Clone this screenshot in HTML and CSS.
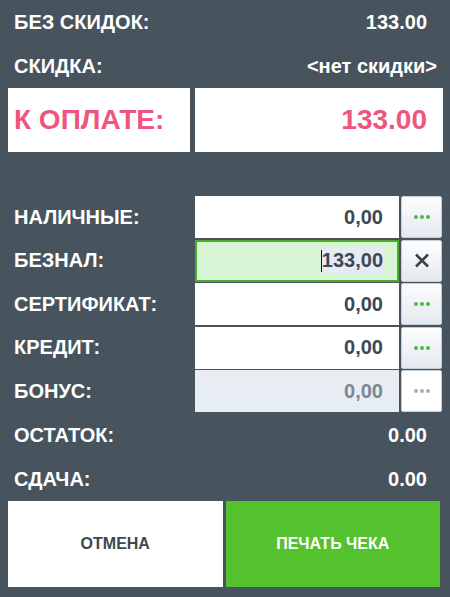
FILE: index.html
```html
<!DOCTYPE html>
<html lang="ru">
<head>
  <meta charset="UTF-8" />
  <meta name="viewport" content="width=device-width, initial-scale=1.0" />
  <title>Оплата</title>
  <link rel="stylesheet" href="styles.css">
</head>
<body>
  <div class="screen">
    <div class="info-row">
      <span>БЕЗ СКИДОК:</span>
      <span class="val">133.00</span>
    </div>
    <div class="info-row">
      <span>СКИДКА:</span>
      <span class="val discount">&lt;нет скидки&gt;</span>
    </div>

    <div class="total">
      <div class="total-label">К ОПЛАТЕ:</div>
      <div class="total-value">133.00</div>
    </div>

    <div class="payments">
      <div class="pay-row">
        <span class="pay-label">НАЛИЧНЫЕ:</span>
        <div class="pay-field">0,00</div>
        <button class="pay-btn"><span class="dots"><i></i><i></i><i></i></span></button>
      </div>
      <div class="pay-row">
        <span class="pay-label">БЕЗНАЛ:</span>
        <div class="pay-field active"><span class="caret"></span><span class="selected">133,00</span></div>
        <button class="pay-btn">
          <svg width="16" height="15" viewBox="0 0 16 15"><path d="M2 1.5 L14 13.5 M14 1.5 L2 13.5" stroke="#3a434b" stroke-width="2.6" fill="none"/></svg>
        </button>
      </div>
      <div class="pay-row">
        <span class="pay-label">СЕРТИФИКАТ:</span>
        <div class="pay-field">0,00</div>
        <button class="pay-btn"><span class="dots"><i></i><i></i><i></i></span></button>
      </div>
      <div class="pay-row">
        <span class="pay-label">КРЕДИТ:</span>
        <div class="pay-field">0,00</div>
        <button class="pay-btn"><span class="dots"><i></i><i></i><i></i></span></button>
      </div>
      <div class="pay-row">
        <span class="pay-label">БОНУС:</span>
        <div class="pay-field disabled">0,00</div>
        <button class="pay-btn disabled"><span class="dots"><i></i><i></i><i></i></span></button>
      </div>
    </div>

    <div class="info-row rest">
      <span>ОСТАТОК:</span>
      <span class="val">0.00</span>
    </div>
    <div class="info-row">
      <span>СДАЧА:</span>
      <span class="val">0.00</span>
    </div>

    <div class="actions">
      <button class="cancel">ОТМЕНА</button>
      <button class="print">ПЕЧАТЬ ЧЕКА</button>
    </div>
  </div>
</body>
</html>
```

FILE: styles.css
```css
* {
  box-sizing: border-box;
  margin: 0;
  padding: 0;
}
body {
  font-family: 'Liberation Sans', Arial, sans-serif;
  font-weight: bold;
  background: #47535d;
  color: #fff;
}
.screen {
  padding: 0 7px 0 8px;
}
.info-row {
  display: flex;
  justify-content: space-between;
  align-items: center;
  height: 44px;
  padding: 0 16px 0 6px;
  font-size: 20px;
}
.info-row .discount {
  margin-right: -10px;
}
.info-row.rest {
  margin-top: 1px;
}
.total {
  display: flex;
  gap: 5px;
  height: 64px;
  margin-bottom: 44px;
  color: #f0557f;
  font-size: 28px;
}
.total-label {
  width: 182px;
  background: #fff;
  display: flex;
  align-items: center;
  padding-left: 6px;
}
.total-value {
  flex: 1;
  background: #fff;
  display: flex;
  align-items: center;
  justify-content: flex-end;
  padding-right: 16px;
}
.payments {
  display: flex;
  flex-direction: column;
  gap: 1.5px;
}
.pay-row {
  display: flex;
  align-items: stretch;
  height: 42px;
}
.pay-label {
  width: 187px;
  display: flex;
  align-items: center;
  padding-left: 6px;
  font-size: 20px;
}
.pay-field {
  width: 204px;
  background: #fff;
  color: #3d4852;
  font-size: 20px;
  display: flex;
  align-items: center;
  justify-content: flex-end;
  padding-right: 16px;
}
.pay-field.active {
  background: #d8f5d6;
  border: 2px solid #4bab2c;
  padding-right: 14px;
}
.pay-field .caret {
  width: 1px;
  height: 22px;
  background: #111;
}
.pay-field .selected {
  background: #e6eaf2;
  padding: 1px 0;
}
.pay-field.disabled {
  background: #e8edf3;
  color: #7a8895;
}
.pay-btn {
  width: 41px;
  margin-left: 2px;
  border: 1px solid #c5cdd6;
  border-radius: 2px;
  background: linear-gradient(#fdfdfe, #e4e9ef);
  display: flex;
  align-items: center;
  justify-content: center;
}
.pay-btn.disabled {
  background: #fff;
}
.dots {
  display: flex;
  gap: 2px;
}
.dots i {
  width: 4px;
  height: 4px;
  border-radius: 50%;
  background: #4cb748;
}
.pay-btn.disabled .dots i {
  background: #a9adb2;
}
.actions {
  display: flex;
  gap: 3px;
  height: 86px;
  margin-right: 3px;
}
.actions button {
  flex: 1;
  border: none;
  font-family: inherit;
  font-weight: bold;
  font-size: 16px;
}
.cancel {
  background: #fff;
  color: #3d4852;
}
.print {
  background: #54c22e;
  color: #fff;
}
```
